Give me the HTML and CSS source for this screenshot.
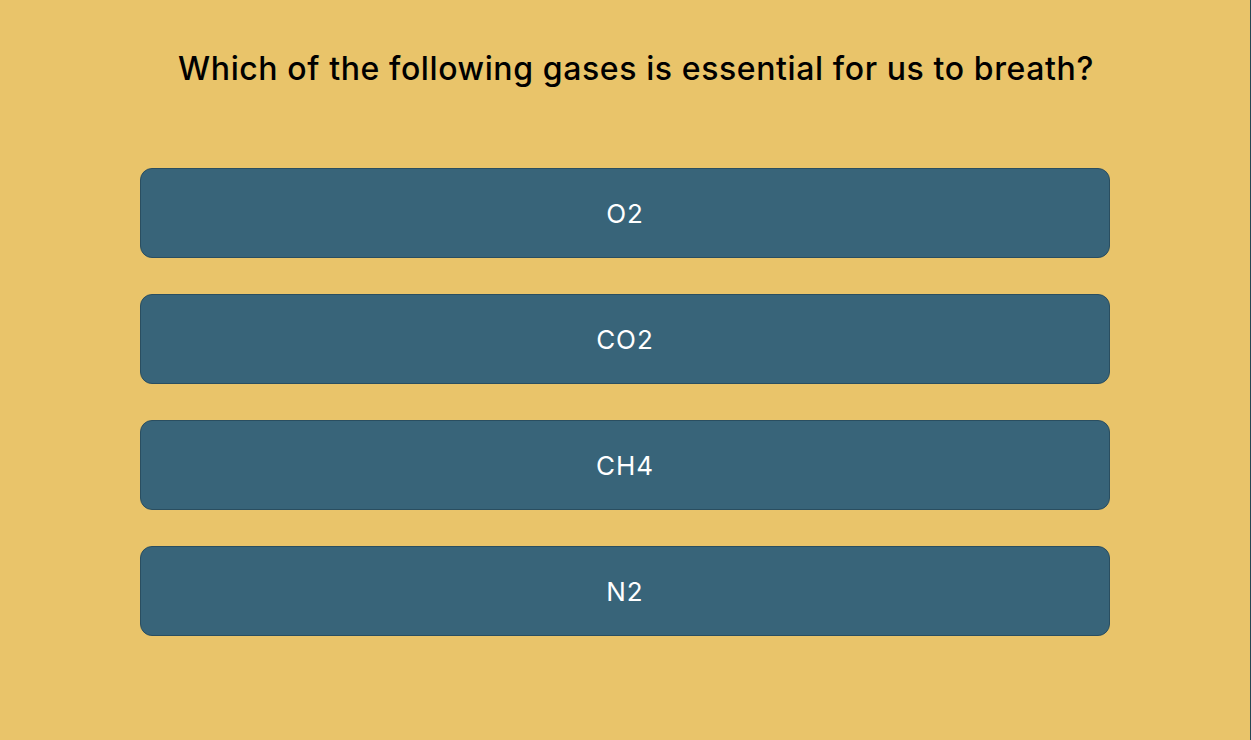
FILE: index.html
```html
<!DOCTYPE html>
<html>
<head>
<meta charset="utf-8">
<link rel="stylesheet" href="styles.css">
</head>
<body>
<div class="page">
  <main class="quiz">
    <h1 class="question">Which of the following gases is essential for us to breath?</h1>
    <div class="answers">
      <button class="answer">O2</button>
      <button class="answer">CO2</button>
      <button class="answer">CH4</button>
      <button class="answer">N2</button>
    </div>
  </main>
  <div class="edge"></div>
</div>
</body>
</html>
```
FILE: styles.css
```css
html, body {
  margin: 0;
  padding: 0;
  height: 100%;
}
body {
  background: #e9c46a;
  font-family: Inter, "DejaVu Sans", sans-serif;
}
.page {
  display: flex;
  height: 740px;
}
.quiz {
  flex: 1;
  display: flex;
  flex-direction: column;
  align-items: center;
}
.edge {
  width: 1px;
  background: #264653;
}
.question {
  margin: 48px 0 0 22px;
  font-size: 32px;
  font-weight: 500;
  letter-spacing: 0.6px;
  color: #000;
  line-height: 42px;
}
.answers {
  margin-top: 78px;
  width: 970px;
  display: flex;
  flex-direction: column;
  gap: 36px;
}
.answer {
  height: 90px;
  background: #386479;
  border: 1px solid #2a4e60;
  border-radius: 12px;
  color: #fff;
  font-family: Inter, "DejaVu Sans", sans-serif;
  font-size: 26px;
  font-weight: 400;
  letter-spacing: 1px;
  cursor: pointer;
}
```
